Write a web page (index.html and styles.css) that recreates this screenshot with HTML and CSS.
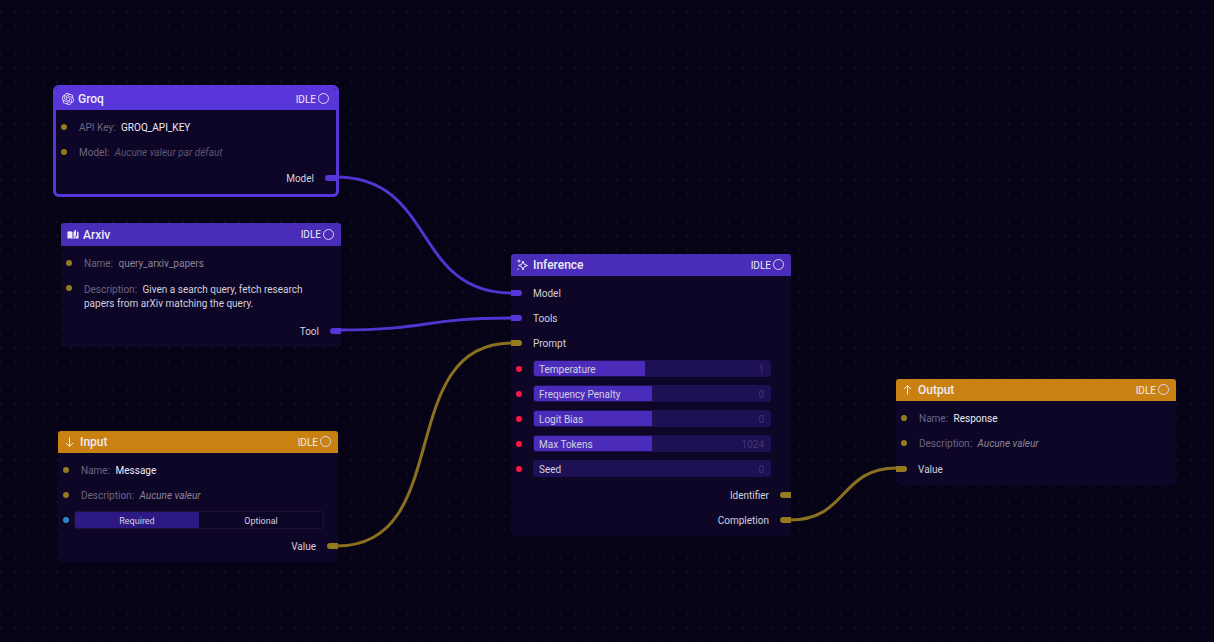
FILE: index.html
```html
<!DOCTYPE html>
<html lang="fr">
<head>
<meta charset="utf-8">
<title>Flow editor</title>
<meta name="viewport" content="width=device-width, initial-scale=1">
<link rel="stylesheet" href="styles.css">
</head>
<body>
<main class="canvas">

  <section class="node node-groq selected">
    <header class="node-head">
      <svg class="icon" viewBox="0 0 24 24" fill="currentColor" aria-hidden="true"><path d="M22.28 9.82a5.98 5.98 0 0 0-.51-4.91 6.05 6.05 0 0 0-6.51-2.9A6.07 6.07 0 0 0 4.98 4.18a5.98 5.98 0 0 0-4 2.9 6.05 6.05 0 0 0 .75 7.1 5.98 5.98 0 0 0 .5 4.91 6.05 6.05 0 0 0 6.52 2.9A5.98 5.98 0 0 0 13.26 24a6.06 6.06 0 0 0 5.77-4.2 5.99 5.99 0 0 0 4-2.9 6.06 6.06 0 0 0-.75-7.08zm-9.02 12.61a4.48 4.48 0 0 1-2.88-1.04l.14-.08 4.78-2.76a.8.8 0 0 0 .4-.68v-6.74l2.01 1.17a.07.07 0 0 1 .04.05v5.58a4.5 4.5 0 0 1-4.49 4.5zM3.6 18.3a4.47 4.47 0 0 1-.54-3.01l.14.08 4.79 2.76a.77.77 0 0 0 .78 0l5.84-3.37v2.33a.08.08 0 0 1-.03.06L9.74 19.95a4.5 4.5 0 0 1-6.14-1.65zM2.34 7.9a4.49 4.49 0 0 1 2.37-1.98V11.6a.77.77 0 0 0 .38.68l5.82 3.35-2.02 1.17a.08.08 0 0 1-.07 0l-4.83-2.79A4.5 4.5 0 0 1 2.34 7.87zm16.6 3.86L13.1 8.36l2.02-1.16a.08.08 0 0 1 .07 0l4.83 2.79a4.49 4.49 0 0 1-.68 8.1v-5.67a.79.79 0 0 0-.4-.67zm2.01-3.03l-.14-.08-4.77-2.78a.78.78 0 0 0-.79 0L9.41 9.23V6.9a.07.07 0 0 1 .03-.06l4.83-2.79a4.5 4.5 0 0 1 6.68 4.66zM8.31 12.86l-2.02-1.16a.08.08 0 0 1-.04-.06V6.07a4.5 4.5 0 0 1 7.38-3.45l-.14.08-4.78 2.76a.8.8 0 0 0-.4.68zm1.1-2.36l2.6-1.5 2.61 1.5v3l-2.6 1.5-2.61-1.5z"/></svg>
      <h2 class="title">Groq</h2><span class="status">IDLE</span><span class="ring"></span>
    </header>
    <div class="body">
      <div class="row"><i class="dot"></i><p class="text"><span class="key">API Key:</span> <span class="strong">GROQ_API_KEY</span></p></div>
      <div class="row"><i class="dot"></i><p class="text"><span class="key">Model:</span> <em class="faint">Aucune valeur par défaut</em></p></div>
      <div class="row next out"><span class="name">Model</span><i class="port violet"></i></div>
    </div>
  </section>

  <section class="node node-arxiv">
    <header class="node-head">
      <svg class="icon" viewBox="0 0 24 24" fill="currentColor" aria-hidden="true"><path d="M1 5.500C4 4 8 4 11 6v14C8 18 4 18 1 19.500zM13 6l5-5v12l-5 5zM20 5l3 1v13.500C20 18 16 18 13 20v-1.500l7-5z"/></svg>
      <h2 class="title">Arxiv</h2><span class="status">IDLE</span><span class="ring"></span>
    </header>
    <div class="body">
      <div class="row"><i class="dot"></i><p class="text"><span class="key">Name:</span> <span class="muted">query_arxiv_papers</span></p></div>
      <div class="row multi"><i class="dot"></i><p class="text"><span class="key">Description:</span> Given a search query, fetch research papers from arXiv matching the query.</p></div>
      <div class="row next out"><span class="name">Tool</span><i class="port violet"></i></div>
    </div>
  </section>

  <section class="node node-input amber">
    <header class="node-head">
      <svg class="icon line" viewBox="0 0 24 24" aria-hidden="true"><path d="M11 3v18M4 14l7 7 7-7"/></svg>
      <h2 class="title">Input</h2><span class="status">IDLE</span><span class="ring"></span>
    </header>
    <div class="body">
      <div class="row"><i class="dot"></i><p class="text"><span class="key">Name:</span> <span class="strong">Message</span></p></div>
      <div class="row"><i class="dot"></i><p class="text"><span class="key">Description:</span> <em class="muted">Aucune valeur</em></p></div>
      <div class="row"><i class="dot blue"></i><div class="toggle"><button type="button" class="on" aria-pressed="true">Required</button><button type="button" aria-pressed="false">Optional</button></div></div>
      <div class="row next out"><span class="name">Value</span><i class="port"></i></div>
    </div>
  </section>

  <section class="node node-inference">
    <header class="node-head">
      <svg class="icon line" viewBox="0 0 24 24" aria-hidden="true"><path d="M12 4l2.500 6.500L21 13l-6.500 2.500L12 22l-2.500-6.500L3 13l6.500-2.500zM4 1v6M1 4h6M2 19v3"/></svg>
      <h2 class="title">Inference</h2><span class="status">IDLE</span><span class="ring"></span>
    </header>
    <div class="body">
      <div class="row in"><i class="port violet"></i><span class="name">Model</span></div>
      <div class="row in"><i class="port violet"></i><span class="name">Tools</span></div>
      <div class="row in"><i class="port"></i><span class="name">Prompt</span></div>
      <div class="row next"><i class="dot red"></i><div class="field"><input id="temperature" type="range" min="0" max="100" value="47" style="--fill:47%"><label for="temperature">Temperature</label><output for="temperature">1</output></div></div>
      <div class="row"><i class="dot red"></i><div class="field"><input id="frequency" type="range" min="0" max="100" value="50" style="--fill:50%"><label for="frequency">Frequency Penalty</label><output for="frequency">0</output></div></div>
      <div class="row"><i class="dot red"></i><div class="field"><input id="logit" type="range" min="0" max="100" value="50" style="--fill:50%"><label for="logit">Logit Bias</label><output for="logit">0</output></div></div>
      <div class="row"><i class="dot red"></i><div class="field"><input id="tokens" type="range" min="0" max="100" value="50" style="--fill:50%"><label for="tokens">Max Tokens</label><output for="tokens">1024</output></div></div>
      <div class="row"><i class="dot red"></i><div class="field"><input id="seed" type="text" inputmode="numeric" value="0"><label for="seed">Seed</label></div></div>
      <div class="row next out"><span class="name">Identifier</span><i class="port"></i></div>
      <div class="row out"><span class="name">Completion</span><i class="port"></i></div>
    </div>
  </section>

  <section class="node node-output amber">
    <header class="node-head">
      <svg class="icon line" viewBox="0 0 24 24" aria-hidden="true"><path d="M11 21V3M4 10l7-7 7 7"/></svg>
      <h2 class="title">Output</h2><span class="status">IDLE</span><span class="ring"></span>
    </header>
    <div class="body">
      <div class="row"><i class="dot"></i><p class="text"><span class="key">Name:</span> <span class="strong">Response</span></p></div>
      <div class="row"><i class="dot"></i><p class="text"><span class="key">Description:</span> <em class="muted">Aucune valeur</em></p></div>
      <div class="row next in"><i class="port"></i><span class="name">Value</span></div>
    </div>
  </section>

  <svg class="wires" aria-hidden="true">
    <path class="wire violet-wire" d="M336 177C436 177 412 293 512 293"/>
    <path class="wire violet-wire" d="M340 330C428 330 424 318 512 318"/>
    <path class="wire" d="M337 546C456 546 393 343 512 343"/>
    <path class="wire" d="M790 520C848 520 839 468 897 468"/>
  </svg>
</main>
</body>
</html>
```
FILE: styles.css
```css
* { box-sizing: border-box; }

body {
  margin: 0;
  background: #070317;
  color: #d3d0dc;
  font: 10px/14px Roboto, "Noto Sans", sans-serif;
}

/* Free canvas on a dotted grid */
.canvas {
  position: relative;
  min-height: 100vh;
  overflow: hidden;
  background-image: conic-gradient(from 270deg at 2px 2px, #120f22 90deg, transparent 0);
  background-size: 14px 14px;
  background-position: 0 11px;
}

.node {
  --accent: #492cb8;
  position: absolute;
  width: 280px;
  border-radius: 3px;
  background: #0e0627;
}
.amber { --accent: #c98212; }
.selected { --accent: #5836d9; box-shadow: 0 0 0 3px var(--accent); }

.node-groq { left: 56px; top: 88px; }
.node-arxiv { left: 61px; top: 223px; }
.node-input { left: 58px; top: 431px; }
.node-inference { left: 511px; top: 254px; }
.node-output { left: 896px; top: 379px; }

.node-head {
  display: flex;
  align-items: center;
  min-height: 22px;
  padding: 0 7px 0 6px;
  border-radius: 3px 3px 0 0;
  background: var(--accent);
  color: #eeeaf7;
}
.node-arxiv .node-head { min-height: 23px; }
.icon { width: 12px; height: 12px; margin-right: 4px; }
.line { fill: none; stroke: currentColor; stroke-width: 2; stroke-linejoin: round; }
.title { flex: 1; margin: 0; font-size: 12px; font-weight: 500; line-height: 16px; }
.status { padding-top: 1px; }
.ring { width: 11px; height: 11px; margin: 0 0 1px 2px; border: 1px solid #ddd7f0; border-radius: 50%; }

.body { padding: 4px 0; }
.row {
  display: flex;
  align-items: center;
  min-height: 25px;
}
.next { margin-top: 1px; }
.dot {
  flex: none;
  width: 6px;
  height: 6px;
  margin-left: 5px;
  border-radius: 50%;
  background: #957a1e;
}
.red { background: #ff1744; }
.blue { background: #3182ce; }
.text { margin: 0 28px 0 12px; }
.text, .name, .field label, .field output { padding-top: 2px; }
.multi { align-items: flex-start; padding: 6px 0; }
.multi .dot { margin-top: 4px; }
.key { margin-right: 3px; color: #6b6580; }
.strong { color: #eceaf2; }
.muted { color: #898498; }
.faint { color: #5c5671; }

.port { flex: none; width: 11px; height: 6px; background: #957a1e; }
.port.violet { background: #5836d9; }
.in { gap: 11px; }
.in .port { border-radius: 0 3px 3px 0; }
.out { justify-content: flex-end; gap: 11px; }
.out .port { border-radius: 3px 0 0 3px; }

/* Labelled value bars: control, name and value share one grid cell */
.field { display: grid; flex: 1; align-items: center; margin: 0 20px 0 11px; }
.field > * { grid-area: 1 / 1; }
.field input {
  width: 100%;
  height: 17px;
  margin: 0;
  padding: 2px 6px 0;
  border: 1px solid #1d1055;
  border-radius: 3px;
  background: #1d1055;
  color: #43346f;
  font: inherit;
  text-align: right;
}
.field input[type="range"] {
  appearance: none;
  background: linear-gradient(90deg, #4b2cba var(--fill), #1d1055 var(--fill));
}
.field input[type="range"]::-webkit-slider-thumb { appearance: none; width: 1px; height: 13px; opacity: 0; }
.field label { padding-left: 6px; justify-self: start; pointer-events: none; }
.field output { padding-right: 7px; justify-self: end; color: #43346f; pointer-events: none; }

.toggle {
  display: grid;
  flex: 1;
  grid-template-columns: 1fr 1fr;
  height: 18px;
  margin: 0 14px 0 5px;
  border: 1px solid #1d1438;
  border-radius: 3px;
  overflow: hidden;
}
.toggle button { padding: 2px 0 0; border: 0; background: none; color: inherit; font-family: inherit; font-size: 9px; line-height: 14px; }
.toggle .on { background: #2d1983; }

.wires { position: absolute; inset: 0; width: 100%; height: 100%; pointer-events: none; }
.wire { fill: none; stroke: #8b711f; stroke-width: 3; }
.violet-wire { stroke: #5234cf; }
```
